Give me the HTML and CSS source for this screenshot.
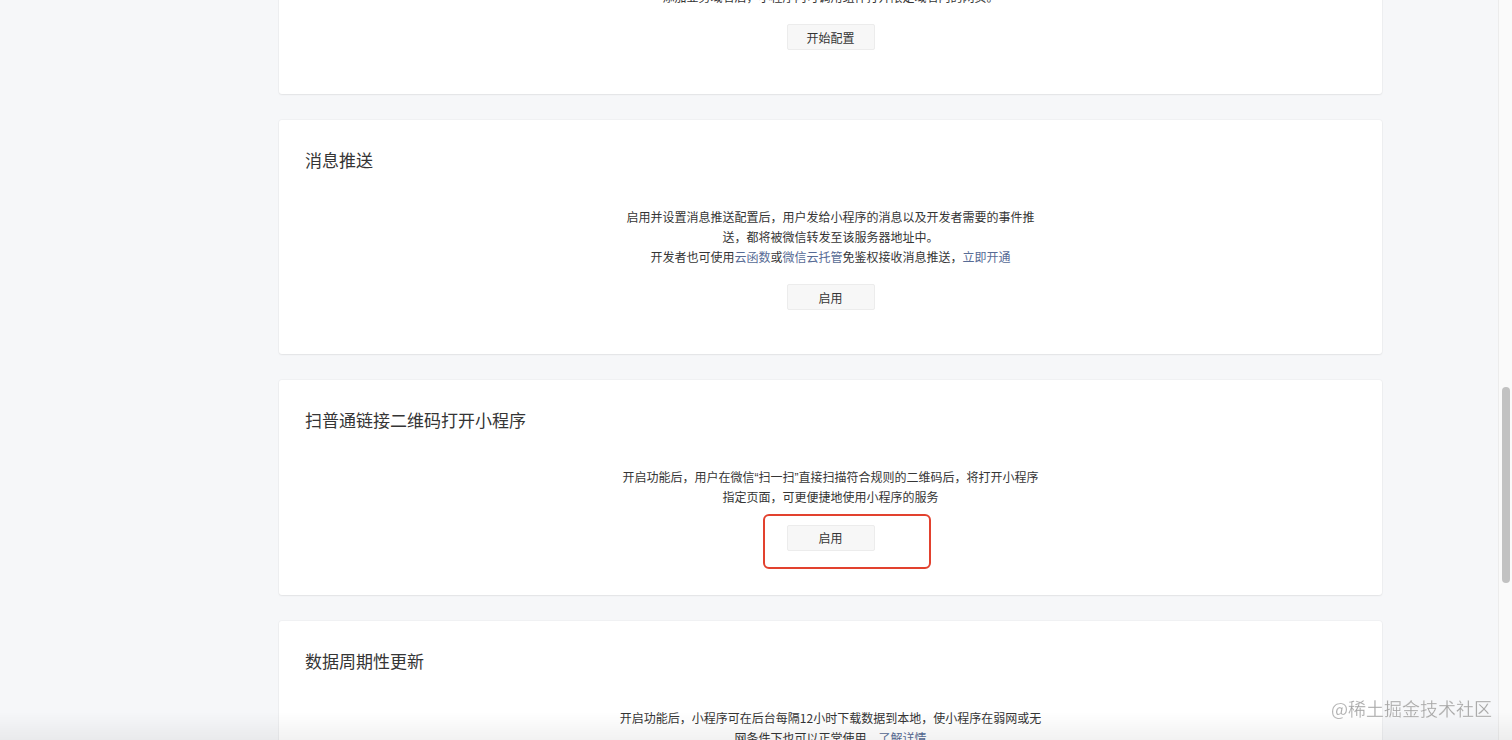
FILE: index.html
```html
<!DOCTYPE html>
<html lang="zh-CN">
<head>
<meta charset="utf-8">
<title>开发设置</title>
<link rel="stylesheet" href="styles.css">
</head>
<body>
<div class="page">
  <aside class="side"></aside>
  <main class="main">
    <section class="card">
      <h2 class="card-title">业务域名</h2>
      <p class="desc">添加业务域名后，小程序内可调用组件打开限定域名内的网页。</p>
      <div class="action"><button class="btn">开始配置</button></div>
    </section>

    <section class="card">
      <h2 class="card-title">消息推送</h2>
      <p class="desc">启用并设置消息推送配置后，用户发给小程序的消息以及开发者需要的事件推<br>送，都将被微信转发至该服务器地址中。<br>开发者也可使用<a class="link" href="#">云函数</a>或<a class="link" href="#">微信云托管</a>免鉴权接收消息推送，<a class="link" href="#">立即开通</a></p>
      <div class="action"><button class="btn">启用</button></div>
    </section>

    <section class="card">
      <h2 class="card-title">扫普通链接二维码打开小程序</h2>
      <p class="desc">开启功能后，用户在微信<span class="q">“</span>扫一扫<span class="q">”</span>直接扫描符合规则的二维码后，将打开小程序<br>指定页面，可更便捷地使用小程序的服务</p>
      <div class="action">
        <div class="mark-wrap">
          <button class="btn">启用</button>
          <span class="mark"></span>
        </div>
      </div>
    </section>

    <section class="card">
      <h2 class="card-title">数据周期性更新</h2>
      <p class="desc">开启功能后，小程序可在后台每隔12小时下载数据到本地，使小程序在弱网或无<br>网条件下也可以正常使用。<a class="link" href="#">了解详情</a></p>
      <div class="action"><button class="btn">开启</button></div>
    </section>
  </main>
</div>

<div class="scrollbar"><span class="thumb"></span></div>
<div class="fade"></div>
<div class="watermark">@稀土掘金技术社区</div>
</body>
</html>
```

FILE: styles.css
```css
* { box-sizing: border-box; }

html, body {
  margin: 0;
  padding: 0;
  height: 100%;
  overflow: hidden;
}

body {
  background: #f6f7f9;
  font-family: "PingFang SC", "Noto Sans CJK SC", "Noto Sans", sans-serif;
  color: #353535;
}

.page {
  display: flex;
  align-items: flex-start;
}

.side {
  flex: 0 0 279px;
}

.main {
  width: 1103px;
  margin-top: -100px;
  display: flex;
  flex-direction: column;
  gap: 26px;
}

.card {
  background: #fff;
  border-radius: 3px;
  box-shadow: 0 1px 2px rgba(0, 0, 0, 0.06), 0 0 0 1px rgba(0, 0, 0, 0.025);
  padding: 28px 26px 44px;
}

.card-title {
  margin: 0;
  font-size: 17px;
  font-weight: 400;
  line-height: 24px;
  color: #353535;
}

.desc {
  margin: 35px auto 0;
  text-align: center;
  font-size: 12px;
  line-height: 20px;
  color: #353535;
}

.q {
  font-family: "Liberation Sans", sans-serif;
  line-height: 0;
}

.link {
  color: #576b95;
  text-decoration: none;
}

.action {
  margin-top: 17px;
  display: flex;
  justify-content: center;
}

.btn {
  width: 88px;
  height: 26px;
  padding: 0;
  border: 1px solid #ececec;
  border-radius: 2px;
  background: #f7f7f7;
  font-family: inherit;
  font-size: 12px;
  color: #353535;
  cursor: pointer;
}

.mark-wrap {
  position: relative;
}

.mark {
  position: absolute;
  left: -24px;
  right: -56px;
  top: -10px;
  bottom: -18px;
  border: 2px solid #e2412e;
  border-radius: 6px;
  pointer-events: none;
}

.scrollbar {
  position: fixed;
  top: 0;
  right: 0;
  width: 14px;
  height: 100%;
  background: #fafafa;
  border-left: 1px solid #ececec;
}

.thumb {
  position: absolute;
  left: 3px;
  top: 387px;
  width: 8px;
  height: 196px;
  border-radius: 4px;
  background: #c2c2c2;
}

.fade {
  position: fixed;
  left: 0;
  right: 0;
  bottom: 0;
  height: 28px;
  background: linear-gradient(to bottom, rgba(0, 0, 0, 0), rgba(0, 0, 0, 0.05));
  pointer-events: none;
}

.watermark {
  position: fixed;
  right: 20px;
  bottom: 20px;
  font-size: 18px;
  line-height: 24px;
  color: rgba(150, 150, 150, 0.85);
  -webkit-text-stroke: 0.3px rgba(255, 255, 255, 0.6);
  text-shadow: 0 0 1px rgba(255, 255, 255, 0.9);
  font-family: "Noto Sans CJK SC", sans-serif;
}
```
